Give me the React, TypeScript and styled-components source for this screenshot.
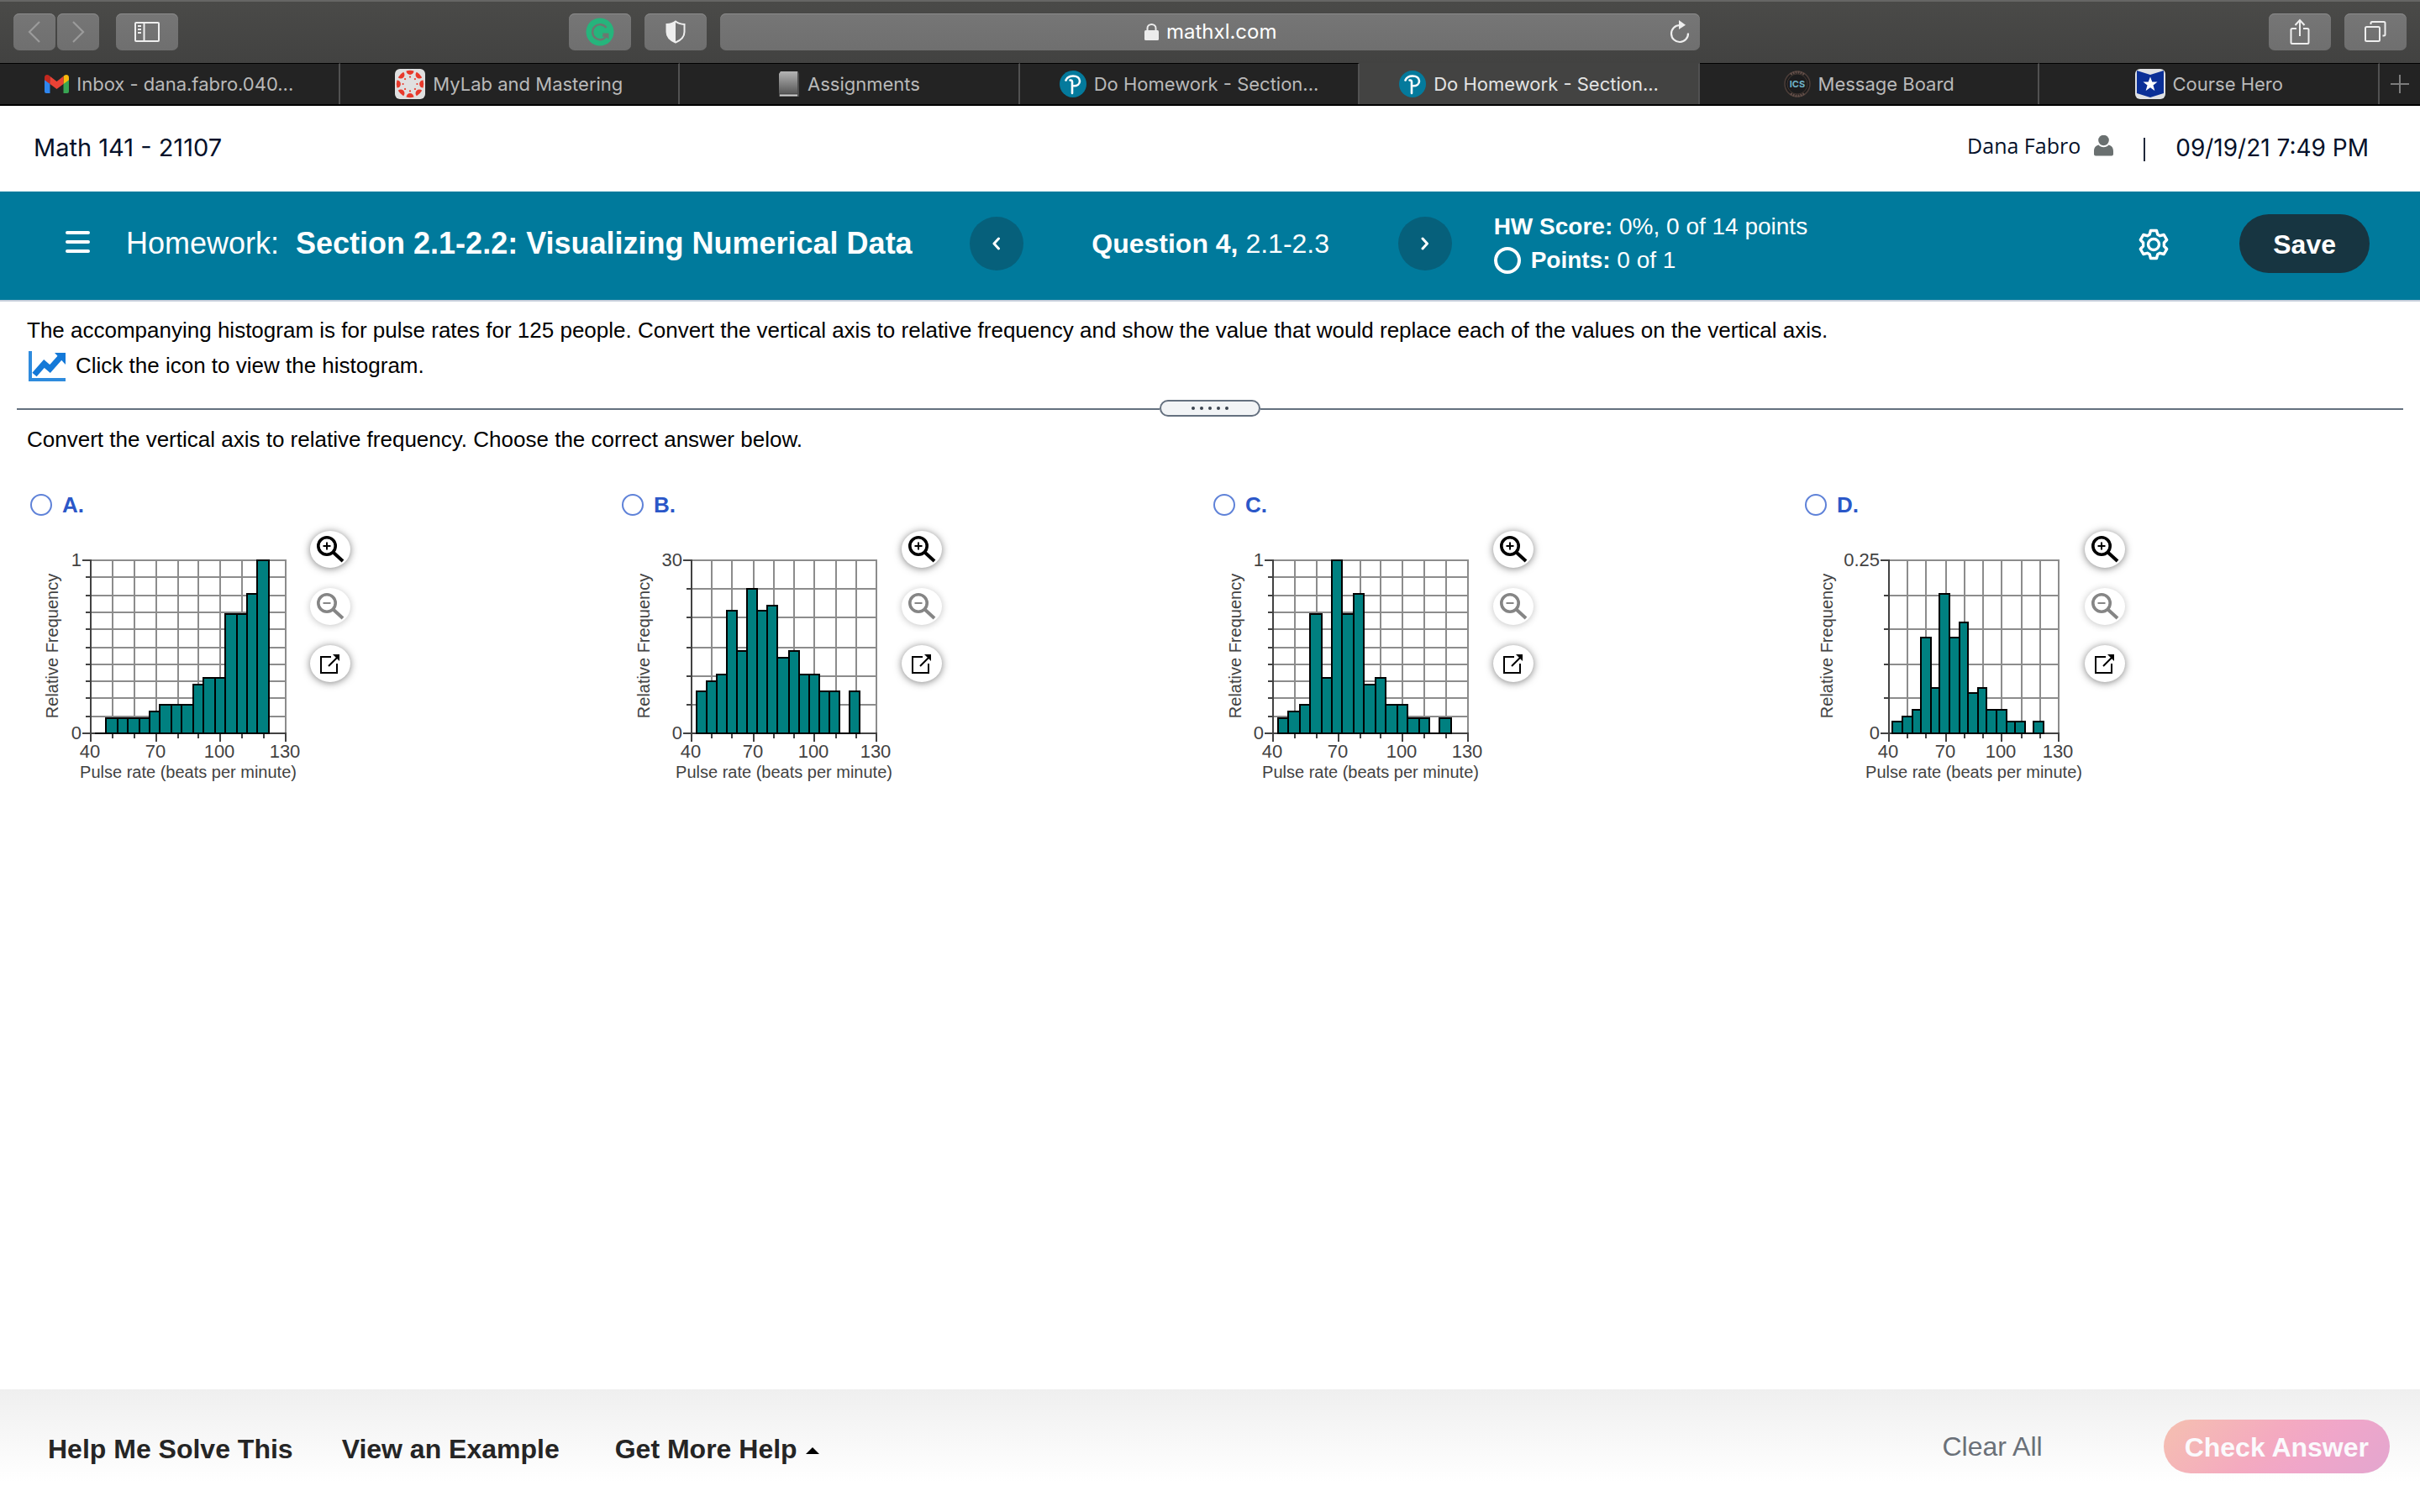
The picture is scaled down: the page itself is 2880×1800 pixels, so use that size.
import React, { useState } from "react";
import styled, { createGlobalStyle } from "styled-components";

const sans = `"Liberation Sans", Arial, Helvetica, sans-serif`;
const ui = `Inter, "Liberation Sans", sans-serif`;
const humanist = `"Open Sans", "Noto Sans", sans-serif`;

const GlobalStyle = createGlobalStyle`
  *, *::before, *::after { box-sizing: border-box; }
  body { margin: 0; background: #fff; color: #000; font-family: ${sans}; }
  button, input { font: inherit; color: inherit; margin: 0; }
  button { border: 0; padding: 0; background: none; cursor: pointer; }
  svg { display: block; flex: none; }
  p, h1, h2 { margin: 0; font-weight: 400; }
`;

const Page = styled.div`
  display: flex;
  flex-direction: column;
  min-height: 100vh;
`;

/* ---------- Browser chrome ---------- */

const Toolbar = styled.div`
  display: grid;
  grid-template-columns: 661fr 1346fr 841fr;
  align-items: center;
  height: 75px;
  padding: 0 16px 1px;
  background: linear-gradient(#4a4a48, #424241);
  border-top: 2px solid #666665;
  font-family: ${ui};
`;

const Cluster = styled.div<{ $gap: number; $end?: boolean }>`
  display: flex;
  align-items: center;
  gap: ${(p) => p.$gap}px;
  justify-content: ${(p) => (p.$end ? "flex-end" : "flex-start")};
`;

const ChromeButton = styled.button<{ $narrow?: boolean }>`
  display: flex;
  align-items: center;
  justify-content: center;
  flex: none;
  width: ${(p) => (p.$narrow ? 50 : 74)}px;
  height: 44px;
  border-radius: 7px;
  background: linear-gradient(#767676, #6f6f6f);
  box-shadow: inset 0 1px 0 #8b8b8b;
`;

const AddressBar = styled.div`
  display: flex;
  align-items: center;
  flex: 1;
  height: 44px;
  padding: 0 12px;
  border-radius: 7px;
  background: linear-gradient(#767676, #6f6f6f);
  box-shadow: inset 0 1px 0 #8b8b8b;
`;

const AddressLabel = styled.label`
  display: flex;
  align-items: center;
  justify-content: center;
  gap: 9px;
  flex: 1;
  padding-left: 26px;
`;

const AddressInput = styled.input`
  width: 132px;
  padding: 0;
  border: 0;
  outline: 0;
  background: none;
  color: #fff;
  font-size: 24px;
  line-height: 32px;
`;

const TabStrip = styled.nav`
  display: flex;
  height: 51px;
  border-bottom: 2px solid #000;
  background: #232323;
  font-family: ${ui};
`;

const Tab = styled.a<{ $active?: boolean }>`
  display: flex;
  align-items: center;
  justify-content: center;
  gap: 9px;
  flex: 1;
  min-width: 0;
  border-top: 1px solid ${(p) => (p.$active ? "#434342" : "#000")};
  border-right: 2px solid #515151;
  background: ${(p) => (p.$active ? "#434342" : "#232323")};
  color: ${(p) => (p.$active ? "#e4e4e4" : "#b9b9b9")};
  font-size: 22px;
  line-height: 28px;
  white-space: nowrap;
  text-decoration: none;
`;

const NewTab = styled.button`
  display: flex;
  align-items: center;
  justify-content: center;
  width: 48px;
  border-top: 1px solid #000;
`;

/* ---------- Course header ---------- */

const CourseHeader = styled.header`
  display: flex;
  align-items: center;
  justify-content: space-between;
  height: 102px;
  padding: 0 61px 2px 40px;
  color: #05112a;
  font-family: ${ui};
`;

const CourseName = styled.h1`
  font-size: 29px;
  line-height: 40px;
`;

const Account = styled.div`
  display: flex;
  align-items: center;
  font-size: 28px;
  line-height: 40px;
`;

const UserName = styled.button`
  display: flex;
  align-items: center;
  gap: 16px;
  padding-bottom: 6px;
  font-family: ${humanist};
  font-size: 25px;
  line-height: 36px;
`;

const Rule = styled.span`
  width: 2px;
  height: 28px;
  margin: 4px 36px 0;
  background: #20283a;
`;

/* ---------- Assignment bar ---------- */

const AssignmentBar = styled.section`
  display: flex;
  align-items: center;
  height: 131px;
  padding: 0 60px 5px 78px;
  border-bottom: 2px solid #c5cedb;
  background: #007a9c;
  color: #fff;
`;

const MenuButton = styled.button`
  display: flex;
  flex-direction: column;
  gap: 7px;
  width: 29px;
  margin: 0 43px 4px 0;
  span {
    height: 4px;
    border-radius: 2px;
    background: #fff;
  }
`;

const AssignmentTitle = styled.h2`
  display: flex;
  gap: 20px;
  margin-right: 68px;
  font-size: 36px;
  line-height: 48px;
  white-space: nowrap;
`;

const StepButton = styled.button`
  display: flex;
  align-items: center;
  justify-content: center;
  flex: none;
  width: 64px;
  height: 64px;
  border-radius: 50%;
  background: #06607b;
`;

const QuestionName = styled.p`
  width: 446px;
  font-size: 32px;
  line-height: 40px;
  text-align: center;
  white-space: nowrap;
`;

const Scores = styled.div`
  display: grid;
  gap: 4px;
  margin-left: 50px;
  font-size: 28px;
  line-height: 36px;
  white-space: nowrap;
`;

const Points = styled.p`
  display: flex;
  align-items: center;
  gap: 12px;
`;

const Ring = styled.span`
  width: 32px;
  height: 32px;
  border: 4px solid #fff;
  border-radius: 50%;
`;

const IconButton = styled.button`
  margin: 2px 84px 0 auto;
`;

const SaveButton = styled.button`
  height: 70px;
  padding: 2px 40px 0;
  border-radius: 35px;
  background: #173541;
  font-size: 32px;
  font-weight: 700;
`;

/* ---------- Exercise ---------- */

const Main = styled.main`
  flex: 1;
  padding: 18px 32px 0;
  font-size: 26px;
  line-height: 32px;
`;

const HistogramLink = styled.button`
  display: flex;
  align-items: center;
  gap: 12px;
  height: 36px;
  margin-top: 9px;
  padding-left: 2px;
`;

const LinkText = styled.span`
  padding-bottom: 2px;
`;

const Divider = styled.div`
  display: flex;
  align-items: center;
  margin: 22px -12px 11px;
  &::before,
  &::after {
    content: "";
    flex: 1;
    height: 2px;
    margin-top: 2px;
    background: #64707f;
  }
`;

const Handle = styled.button`
  display: flex;
  align-items: center;
  justify-content: center;
  gap: 6px;
  width: 120px;
  height: 20px;
  border: 2px solid #64707f;
  border-radius: 10px;
  background: #f2f4f6;
  span {
    width: 4px;
    height: 4px;
    border-radius: 50%;
    background: #3b4450;
  }
`;

const Choices = styled.fieldset`
  display: grid;
  grid-template-columns: repeat(4, 1fr);
  margin: 46px 0 0;
  padding: 0;
  border: 0;
`;

const ChoiceLabel = styled.label`
  display: flex;
  align-items: center;
  gap: 12px;
  padding-left: 4px;
  color: #2b57c8;
  font-weight: 700;
`;

const Radio = styled.input`
  appearance: none;
  width: 26px;
  height: 26px;
  border: 2px solid #5f82d8;
  border-radius: 50%;
  background: #fff;
  &:checked {
    background: radial-gradient(#2b57c8 45%, #fff 50%);
  }
`;

const Figure = styled.div`
  display: flex;
  gap: 8px;
`;

const Tools = styled.div`
  display: flex;
  flex-direction: column;
  gap: 24px;
  padding-top: 15px;
`;

const ToolButton = styled.button`
  display: flex;
  align-items: center;
  justify-content: center;
  width: 48px;
  height: 44px;
  border-radius: 50%;
  background: #fff;
  color: #000;
  box-shadow: 0 1px 10px rgba(0, 0, 0, 0.5);
  &:disabled {
    color: #858585;
    box-shadow: 0 1px 8px rgba(0, 0, 0, 0.24);
  }
`;

const Plot = styled.svg`
  overflow: visible;
  font-family: ${sans};
  fill: #424242;
`;

/* ---------- Footer ---------- */

const Footer = styled.footer`
  display: flex;
  align-items: center;
  justify-content: space-between;
  padding: 36px 36px 46px 57px;
  background: linear-gradient(#efefef, #ffffff 110px);
  font-size: 32px;
  line-height: 40px;
`;

const HelpLinks = styled.div`
  display: flex;
  align-items: center;
  padding-top: 6px;
  color: #252525;
  font-weight: 700;
`;

const HelpLink = styled.button<{ $after?: number }>`
  display: flex;
  align-items: center;
  gap: 10px;
  margin-right: ${(p) => p.$after ?? 0}px;
  svg {
    margin-top: 4px;
  }
`;

const Actions = styled.div`
  display: flex;
  align-items: center;
  gap: 144px;
`;

const ClearButton = styled.button`
  color: #6a7078;
`;

const CheckButton = styled.button`
  height: 64px;
  padding: 2px 25px 0;
  border-radius: 32px;
  background: linear-gradient(135deg, #f5c0b0, #f4aac0 45%, #f0a6c9 65%, #e3a6cf);
  color: #fbfafd;
  font-weight: 700;
`;

/* ---------- Histogram ---------- */

type Histogram = {
  id: string;
  max: string;
  left: number;
  right: number;
  rows: number;
  heights: number[];
};

const histograms: Histogram[] = [
  { id: "A", max: "1", left: 76, right: 308, rows: 10, heights: [0, 18, 18, 18, 18, 26, 34, 34, 34, 58, 66, 66, 142, 142, 166, 206] },
  { id: "B", max: "30", left: 87, right: 307, rows: 6, heights: [50, 62, 70, 146, 98, 172, 146, 152, 90, 98, 70, 70, 50, 50, 0, 50] },
  { id: "C", max: "1", left: 75, right: 307, rows: 10, heights: [18, 26, 34, 142, 66, 206, 142, 166, 58, 66, 34, 34, 18, 18, 0, 18] },
  { id: "D", max: "0.25", left: 104, right: 306, rows: 5, heights: [14, 20, 28, 114, 54, 166, 114, 132, 48, 54, 28, 28, 14, 14, 0, 14] },
];

const TOP = 50;
const BOTTOM = 256;
const toGrid = (v: number) => Math.ceil(v / 2 - 0.5) * 2;

function HistogramPlot({ id, max, left, right, rows, heights }: Histogram) {
  const width = right - left;
  const xs = Array.from({ length: 10 }, (_, i) => left + toGrid((i * width) / 9));
  const ys = Array.from({ length: rows + 1 }, (_, i) => BOTTOM - toGrid((i * (BOTTOM - TOP)) / rows));
  const edge = (i: number) => left + Math.floor(((2.5 + 5 * i) * width) / 90 / 2) * 2;
  return (
    <Plot width="329" height="316" viewBox="0 0 329 316" role="img" aria-label={`Histogram ${id}`}>
      <g stroke="#8c8c8c" strokeWidth="2">
        {xs.map((x) => (
          <line key={x} x1={x} x2={x} y1={TOP - 1} y2={BOTTOM} />
        ))}
        {ys.map((y) => (
          <line key={y} x1={left} x2={right + 1} y1={y} y2={y} />
        ))}
      </g>
      <g stroke="#424242" strokeWidth="2">
        <line x1={left} x2={left} y1={TOP - 1} y2={BOTTOM} />
        <line x1={left} x2={right + 1} y1={BOTTOM} y2={BOTTOM} />
        {ys.map((y, i) => (
          <line key={y} x1={left - (i % rows ? 6 : 10)} x2={left} y1={y} y2={y} />
        ))}
        {xs.map((x, i) => (
          <line key={x} x1={x} x2={x} y1={BOTTOM} y2={BOTTOM + (i % 3 ? 6 : 10)} />
        ))}
      </g>
      <g fill="#008080" stroke="#000" strokeWidth="2">
        {heights.map((h, i) => (
          <rect key={i} x={edge(i)} y={BOTTOM - h} width={edge(i + 1) - edge(i)} height={h || 0.01} />
        ))}
      </g>
      <g fontSize="22">
        <text x={left - 11} y={TOP + 7} textAnchor="end">{max}</text>
        <text x={left - 11} y={BOTTOM + 7} textAnchor="end">0</text>
        {["40", "70", "100", "130"].map((t, i) => (
          <text key={t} x={xs[i * 3] - 1} y={BOTTOM + 29} textAnchor="middle">{t}</text>
        ))}
      </g>
      <g fontSize="20">
        <text x={(left + right) / 2} y={BOTTOM + 53} textAnchor="middle">Pulse rate (beats per minute)</text>
        <text transform="translate(37 152) rotate(-90)" textAnchor="middle">Relative Frequency</text>
      </g>
    </Plot>
  );
}

/* ---------- Icons ---------- */

const Chevron = ({ flip }: { flip?: boolean }) => (
  <svg width="16" height="26" viewBox="0 0 16 26" fill="none" stroke="#9b9b9b" strokeWidth="2.2">
    <path d={flip ? "M2 1L14 13L2 25" : "M14 1L2 13L14 25"} />
  </svg>
);

const SidebarIcon = () => (
  <svg width="30" height="24" viewBox="0 0 30 24" fill="none" stroke="#eee" strokeWidth="2">
    <rect x="1" y="1" width="28" height="22" rx="1" />
    <path d="M11.500 1V23M4 5H8M4 9H8M4 13H8" />
  </svg>
);

const GrammarlyIcon = () => (
  <svg width="34" height="34" viewBox="0 0 34 34">
    <circle cx="17" cy="17" r="16.500" fill="#26b47c" />
    <path d="M24.500 12A9 9 0 1 0 25 21.500H20" fill="none" stroke="#6d7770" strokeWidth="2.400" />
    <path d="M19.500 18.500H27.500V26L25 23.500Z" fill="#6d7770" />
  </svg>
);

const ShieldIcon = () => (
  <svg width="24" height="28" viewBox="0 0 24 28">
    <path d="M12 1.500C9 4 5 4.800 1.500 5V14C1.500 20 6 24 12 26.500C18 24 22.500 20 22.500 14V5C19 4.800 15 4 12 1.500Z" fill="none" stroke="#eee" strokeWidth="2" />
    <path d="M12 1.500C9 4 5 4.800 1.500 5V14C1.500 20 6 24 12 26.500Z" fill="#eee" />
  </svg>
);

const LockIcon = () => (
  <svg width="17" height="20" viewBox="0 0 17 20">
    <rect x="0" y="8" width="17" height="12" rx="1.500" fill="#ececec" />
    <path d="M3.500 9V5.500A5 4.500 0 0 1 13.500 5.500V9" fill="none" stroke="#ececec" strokeWidth="2" />
  </svg>
);

const ReloadIcon = () => (
  <svg width="24" height="28" viewBox="0 0 24 28">
    <path d="M12 6A10 10 0 1 0 22 15.500" fill="none" stroke="#eee" strokeWidth="2.200" />
    <path d="M11 0L19 5.800L11 11Z" fill="#eee" />
  </svg>
);

const ShareIcon = () => (
  <svg width="24" height="32" viewBox="0 0 24 32" fill="none" stroke="#eee" strokeWidth="2">
    <path d="M8 12H3A1.500 1.500 0 0 0 1.500 13.500V28.500A1.500 1.500 0 0 0 3 30H21A1.500 1.500 0 0 0 22.500 28.500V13.500A1.500 1.500 0 0 0 21 12H16M12 21V2M6.500 8L12 2L17.500 8" />
  </svg>
);

const TabsIcon = () => (
  <svg width="26" height="26" viewBox="0 0 26 26" fill="none" stroke="#eee" strokeWidth="2">
    <rect x="1" y="7" width="17" height="17" rx="1.500" />
    <path d="M7.500 4V2.500A1.500 1.500 0 0 1 9 1H23A1.500 1.500 0 0 1 24.500 2.500V16A1.500 1.500 0 0 1 23 17.500H21.500" />
  </svg>
);

const GmailIcon = () => (
  <svg width="29" height="22" viewBox="0 0 29 22">
    <path d="M0 3.500V20A2 2 0 0 0 2 22H6.500V8Z" fill="#2f86ee" />
    <path d="M29 3.500V20A2 2 0 0 1 27 22H22.500V8Z" fill="#38a653" />
    <path d="M0 3.200C0 .3 3.200-.8 5.300.8L6.500 1.800V11L0 6.200Z" fill="#c3281f" />
    <path d="M29 3.200C29 .3 25.800-.8 23.700.8L22.500 1.800V11L29 6.200Z" fill="#f8b90d" />
    <path d="M6.500 1.800L14.500 8L22.500 1.800V11L14.500 17L6.500 11Z" fill="#e94235" />
  </svg>
);

const CanvasIcon = () => (
  <svg width="36" height="36" viewBox="0 0 36 36">
    <rect width="36" height="36" rx="6" fill="#e0e0e0" />
    {Array.from({ length: 8 }, (_, i) => (
      <g key={i} transform={`rotate(${i * 45} 18 18)`} fill="#e8392b">
        <path d="M13.500 2.400A16 16 0 0 1 22.500 2.400A4.500 4.500 0 0 1 13.500 2.400Z" />
        <circle cx="18" cy="9.600" r="1.100" />
      </g>
    ))}
  </svg>
);

const BookIcon = () => (
  <svg width="26" height="32" viewBox="0 0 26 32">
    <defs>
      <linearGradient id="cover" x1="0" y1="0" x2="0" y2="1">
        <stop offset="0" stopColor="#b5b5b5" />
        <stop offset="1" stopColor="#5a5a5a" />
      </linearGradient>
    </defs>
    <path d="M3 1H24L25 4V31H1V4Z" fill="#4d4d4d" />
    <path d="M3 1H23V27H1V4Z" fill="url(#cover)" />
    <path d="M2 28.500H23V30.500H2Z" fill="#cfcfcf" />
  </svg>
);

const PearsonIcon = () => (
  <svg width="32" height="32" viewBox="0 0 32 32">
    <circle cx="16" cy="16" r="16" fill="#047a9c" />
    <path d="M7.500 11.500C9 8 12.500 6.500 16 6.500C20.500 6.500 24 8.800 24 12.500C24 16 21 18.300 17 18.300" fill="none" stroke="#fff" strokeWidth="2.600" strokeLinecap="round" />
    <path d="M12.500 11.500C14 11.200 15 12 15 13.500V27" fill="none" stroke="#fff" strokeWidth="2.600" strokeLinecap="round" />
  </svg>
);

const IcsIcon = () => (
  <svg width="32" height="32" viewBox="0 0 32 32">
    <circle cx="16" cy="16" r="15" fill="#1c1c1d" stroke="#4b3d38" strokeWidth="1.500" />
    <circle cx="16" cy="16" r="12" fill="none" stroke="#41352f" strokeWidth="1" />
    <path d="M8 4.500A14 14 0 0 1 24 4.500M8 27.500A14 14 0 0 0 24 27.500" fill="none" stroke="#64504a" strokeWidth="3" strokeDasharray="2 1" />
    <text x="16" y="20" textAnchor="middle" fontSize="11" fontWeight="700" fill="#6fb3c9">ICS</text>
  </svg>
);

const CourseHeroIcon = () => (
  <svg width="36" height="36" viewBox="0 0 36 36">
    <rect width="36" height="36" rx="6" fill="#dfe1e4" />
    <path d="M2 2L18 7L34 2V29L18 34L2 29Z" fill="#0a2f97" />
    <path d="M18 9.500L20.300 15.500H26.500L21.500 19.500L23.300 26L18 22.200L12.700 26L14.500 19.500L9.500 15.500H15.700Z" fill="#fff" />
  </svg>
);

const UserIcon = () => (
  <svg width="23" height="25" viewBox="0 0 23 25" fill="#6a7070">
    <ellipse cx="11.500" cy="6" rx="6.300" ry="6.200" />
    <path d="M5.500 11.500C7 13.300 9 14.200 11.500 14.200S16 13.300 17.500 11.500C21 12.300 23 15 23 19V22.500A2 2 0 0 1 21 24.500H2A2 2 0 0 1 0 22.500V19C0 15 2 12.300 5.500 11.500Z" />
  </svg>
);

const StepIcon = ({ flip }: { flip?: boolean }) => (
  <svg width="10" height="16" viewBox="0 0 10 16" fill="none" stroke="#fff" strokeWidth="3" strokeLinecap="round" strokeLinejoin="round">
    <path d={flip ? "M2 2L7.500 8L2 14" : "M7.500 2L2 8L7.500 14"} />
  </svg>
);

const GearIcon = () => (
  <svg width="36" height="38" viewBox="0 0 36 38" fill="none" stroke="#fff" strokeWidth="3.400" strokeLinejoin="round">
    <path d="M14.500 2.500H21.500L22.800 7.200L25.500 8.700L30.200 7.500L33.700 13.500L30.400 17V21L33.700 24.500L30.200 30.500L25.500 29.300L22.800 30.800L21.500 35.500H14.500L13.200 30.800L10.500 29.300L5.800 30.500L2.300 24.500L5.600 21V17L2.300 13.500L5.800 7.500L10.500 8.700L13.200 7.200Z" />
    <circle cx="18" cy="19" r="6.500" />
  </svg>
);

const TrendIcon = () => (
  <svg width="44" height="36" viewBox="0 0 44 36">
    <path d="M0 0H4V32H44V36H0Z" fill="#2f8bdd" />
    <path d="M7 28L18.500 15L25.500 21L38 7" fill="none" stroke="#1479d8" strokeWidth="7" strokeLinejoin="miter" />
    <path d="M31 2H44V16Z" fill="#1479d8" />
  </svg>
);

const ZoomIcon = ({ plus }: { plus?: boolean }) => (
  <svg width="34" height="32" viewBox="0 0 34 32" fill="none" stroke="currentColor">
    <circle cx="13" cy="12" r="10.200" strokeWidth="3.600" />
    <path d="M20.500 19.500L32 30" strokeWidth="4" />
    <path d={plus ? "M8.500 12H17.500M13 7.500V16.500" : "M8.500 12H17.500"} strokeWidth="2" />
  </svg>
);

const PopOutIcon = () => (
  <svg width="24" height="24" viewBox="0 0 24 24" fill="none" stroke="currentColor" strokeWidth="2">
    <path d="M13 4H1V23H20V12M10 15L20 5" />
    <path d="M15 1H23V9Z" fill="currentColor" stroke="none" />
  </svg>
);

const tabs = [
  { title: "Inbox - dana.fabro.040...", icon: <GmailIcon /> },
  { title: "MyLab and Mastering", icon: <CanvasIcon /> },
  { title: "Assignments", icon: <BookIcon /> },
  { title: "Do Homework - Section...", icon: <PearsonIcon /> },
  { title: "Do Homework - Section...", icon: <PearsonIcon />, active: true },
  { title: "Message Board", icon: <IcsIcon /> },
  { title: "Course Hero", icon: <CourseHeroIcon /> },
];

export default function App() {
  const [answer, setAnswer] = useState("");
  return (
    <Page>
      <GlobalStyle />
      <Toolbar>
        <Cluster $gap={20}>
          <Cluster $gap={2}>
            <ChromeButton $narrow aria-label="Back"><Chevron /></ChromeButton>
            <ChromeButton $narrow aria-label="Forward"><Chevron flip /></ChromeButton>
          </Cluster>
          <ChromeButton aria-label="Sidebar"><SidebarIcon /></ChromeButton>
        </Cluster>
        <Cluster $gap={16}>
          <ChromeButton aria-label="Grammarly"><GrammarlyIcon /></ChromeButton>
          <ChromeButton aria-label="Privacy report"><ShieldIcon /></ChromeButton>
          <AddressBar>
            <AddressLabel>
              <LockIcon />
              <AddressInput aria-label="Address" defaultValue="mathxl.com" />
            </AddressLabel>
            <button aria-label="Reload"><ReloadIcon /></button>
          </AddressBar>
        </Cluster>
        <Cluster $gap={16} $end>
          <ChromeButton aria-label="Share"><ShareIcon /></ChromeButton>
          <ChromeButton aria-label="Tab overview"><TabsIcon /></ChromeButton>
        </Cluster>
      </Toolbar>
      <TabStrip>
        {tabs.map((tab, i) => (
          <Tab key={i} href="#" $active={tab.active}>
            {tab.icon}
            {tab.title}
          </Tab>
        ))}
        <NewTab aria-label="New tab">
          <svg width="22" height="22" viewBox="0 0 22 22" stroke="#7c7c7c" strokeWidth="2">
            <path d="M0 11H22M11 0V22" />
          </svg>
        </NewTab>
      </TabStrip>

      <CourseHeader>
        <CourseName>Math 141 - 21107</CourseName>
        <Account>
          <UserName>Dana Fabro <UserIcon /></UserName>
          <Rule />
          <time>09/19/21 7:49 PM</time>
        </Account>
      </CourseHeader>

      <AssignmentBar>
        <MenuButton aria-label="Menu"><span /><span /><span /></MenuButton>
        <AssignmentTitle>
          <span>Homework:</span>
          <strong>Section 2.1-2.2: Visualizing Numerical Data</strong>
        </AssignmentTitle>
        <StepButton aria-label="Previous question"><StepIcon /></StepButton>
        <QuestionName><strong>Question 4,</strong> 2.1-2.3</QuestionName>
        <StepButton aria-label="Next question"><StepIcon flip /></StepButton>
        <Scores>
          <p><strong>HW Score:</strong> 0%, 0 of 14 points</p>
          <Points><Ring /><span><strong>Points:</strong> 0 of 1</span></Points>
        </Scores>
        <IconButton aria-label="Settings"><GearIcon /></IconButton>
        <SaveButton>Save</SaveButton>
      </AssignmentBar>

      <Main>
        <p>The accompanying histogram is for pulse rates for 125 people. Convert the vertical axis to relative frequency and show the value that would replace each of the values on the vertical axis.</p>
        <HistogramLink><TrendIcon /><LinkText>Click the icon to view the histogram.</LinkText></HistogramLink>
        <Divider>
          <Handle aria-label="Resize"><span /><span /><span /><span /><span /></Handle>
        </Divider>
        <p>Convert the vertical axis to relative frequency. Choose the correct answer below.</p>
        <Choices>
          {histograms.map((h) => (
            <div key={h.id}>
              <ChoiceLabel>
                <Radio type="radio" name="answer" value={h.id} checked={answer === h.id} onChange={() => setAnswer(h.id)} />
                {h.id}.
              </ChoiceLabel>
              <Figure>
                <HistogramPlot {...h} />
                <Tools>
                  <ToolButton aria-label="Zoom in"><ZoomIcon plus /></ToolButton>
                  <ToolButton aria-label="Zoom out" disabled><ZoomIcon /></ToolButton>
                  <ToolButton aria-label="Open in new window"><PopOutIcon /></ToolButton>
                </Tools>
              </Figure>
            </div>
          ))}
        </Choices>
      </Main>

      <Footer>
        <HelpLinks>
          <HelpLink $after={58}>Help Me Solve This</HelpLink>
          <HelpLink $after={66}>View an Example</HelpLink>
          <HelpLink>
            Get More Help
            <svg width="16" height="8" viewBox="0 0 16 8"><path d="M0 8L8 0L16 8Z" fill="#000" /></svg>
          </HelpLink>
        </HelpLinks>
        <Actions>
          <ClearButton>Clear All</ClearButton>
          <CheckButton>Check Answer</CheckButton>
        </Actions>
      </Footer>
    </Page>
  );
}
